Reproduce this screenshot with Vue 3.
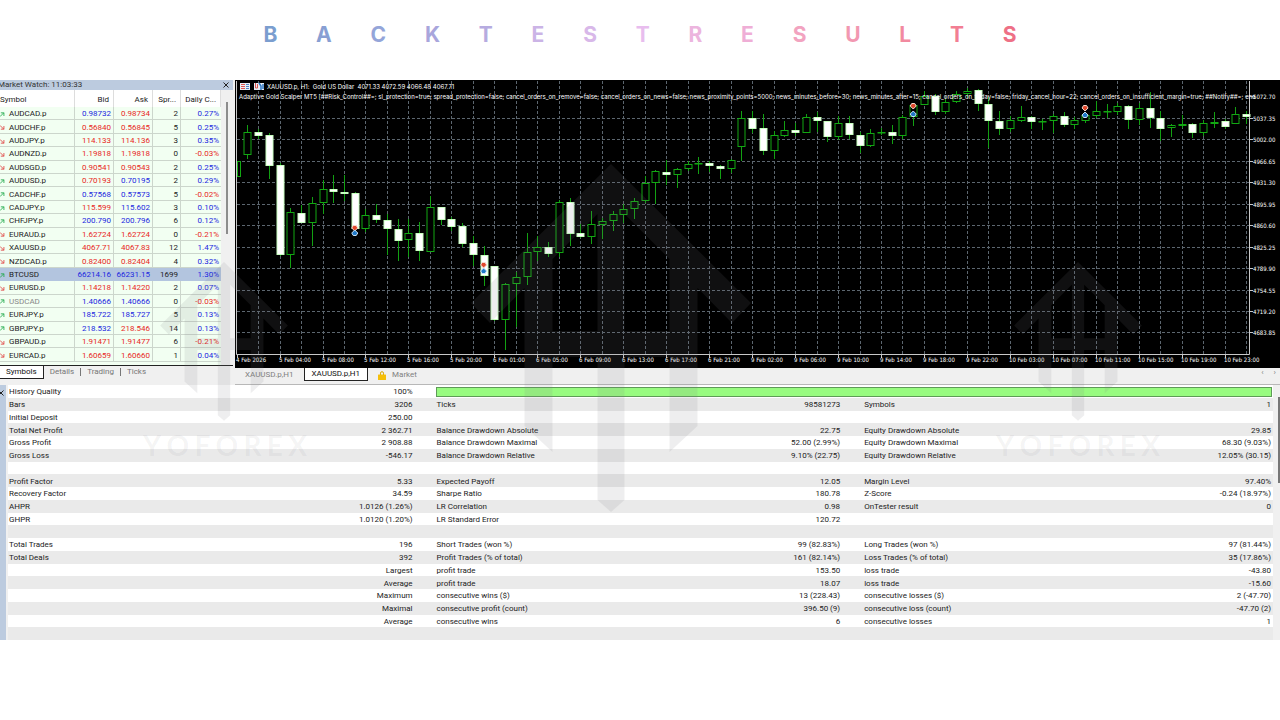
<script setup>
const title = [
  ['B', '#7b9ecf'], ['A', '#889fd3'], ['C', '#94a5d9'], ['K', '#a9a6dc'], ['T', '#b6abe0'],
  ['E', '#cbb4e6'], ['S', '#d8b8e9'], ['T', '#e8bdee'], ['R', '#ecb5de'], ['E', '#efaed6'],
  ['S', '#f2a3c0'], ['U', '#f298b1'], ['L', '#f28aa0'], ['T', '#f27e93'], ['S', '#ee7086'],
]

// symbol, direction, bid, bid tone, ask, ask tone, spread, daily change
const quotes = [
  ['AUDCAD.p', 'u', '0.98732', 'b', '0.98734', 'r', '2', '0.27%'],
  ['AUDCHF.p', 'd', '0.56840', 'r', '0.56845', 'r', '5', '0.25%'],
  ['AUDJPY.p', 'd', '114.133', 'r', '114.136', 'r', '3', '0.35%'],
  ['AUDNZD.p', 'd', '1.19818', 'r', '1.19818', 'r', '0', '-0.03%'],
  ['AUDSGD.p', 'd', '0.90541', 'r', '0.90543', 'r', '2', '0.25%'],
  ['AUDUSD.p', 'u', '0.70193', 'r', '0.70195', 'b', '2', '0.29%'],
  ['CADCHF.p', 'u', '0.57568', 'b', '0.57573', 'b', '5', '-0.02%'],
  ['CADJPY.p', 'u', '115.599', 'r', '115.602', 'b', '3', '0.10%'],
  ['CHFJPY.p', 'u', '200.790', 'b', '200.796', 'b', '6', '0.12%'],
  ['EURAUD.p', 'd', '1.62724', 'r', '1.62724', 'r', '0', '-0.21%'],
  ['XAUUSD.p', 'd', '4067.71', 'r', '4067.83', 'r', '12', '1.47%'],
  ['NZDCAD.p', 'd', '0.82400', 'r', '0.82404', 'r', '4', '0.32%'],
  ['BTCUSD', 'u', '66214.16', 'b', '66231.15', 'b', '1699', '1.30%'],
  ['EURUSD.p', 'd', '1.14218', 'r', '1.14220', 'r', '2', '0.07%'],
  ['USDCAD', 'u', '1.40666', 'b', '1.40666', 'b', '0', '-0.03%'],
  ['EURJPY.p', 'u', '185.722', 'b', '185.727', 'b', '5', '0.13%'],
  ['GBPJPY.p', 'u', '218.532', 'b', '218.546', 'r', '14', '0.13%'],
  ['GBPAUD.p', 'd', '1.91471', 'r', '1.91477', 'r', '6', '-0.21%'],
  ['EURCAD.p', 'd', '1.60659', 'r', '1.60660', 'r', '1', '0.04%'],
]

// full (1) or hollow (0), body top, body bottom, high, low
const candles = [
  [0, 161, 177, 161, 177], [0, 132, 155, 125, 159], [1, 132, 136, 129, 139], [1, 135, 166, 133, 179],
  [1, 165, 255, 163, 256], [0, 212, 255, 208, 268], [1, 213, 223, 205, 223], [0, 203, 223, 197, 246],
  [0, 189, 203, 180, 214], [1, 189, 192, 175, 203], [1, 192, 194, 175, 201], [1, 193, 229, 192, 235],
  [0, 215, 229, 209, 232], [1, 215, 220, 204, 223], [1, 220, 229, 214, 255], [1, 229, 241, 219, 261],
  [0, 233, 240, 219, 257], [1, 233, 251, 222, 261], [0, 207, 252, 196, 252], [1, 207, 220, 207, 225],
  [1, 219, 227, 217, 231], [1, 226, 244, 223, 247], [1, 243, 255, 236, 266], [1, 255, 276, 246, 286],
  [1, 266, 320, 266, 321], [0, 284, 320, 283, 350], [0, 277, 284, 272, 327], [0, 252, 277, 233, 285],
  [0, 247, 252, 236, 261], [1, 247, 254, 242, 257], [0, 202, 253, 200, 257], [1, 202, 234, 198, 246],
  [1, 233, 237, 224, 238], [0, 224, 237, 211, 244], [0, 221, 225, 218, 239], [0, 214, 221, 211, 231],
  [0, 209, 215, 204, 223], [0, 201, 209, 198, 219], [0, 183, 201, 176, 203], [0, 171, 183, 170, 204],
  [1, 172, 175, 160, 185], [0, 169, 175, 168, 188], [0, 164, 169, 161, 171], [0, 163, 163, 157, 174],
  [1, 163, 166, 161, 172], [1, 166, 169, 165, 179], [0, 160, 169, 159, 173], [0, 118, 147, 111, 161],
  [1, 118, 129, 111, 133], [1, 128, 151, 114, 155], [0, 135, 151, 131, 159], [0, 130, 136, 121, 137],
  [1, 130, 133, 123, 136], [0, 117, 133, 114, 133], [1, 117, 121, 112, 132], [1, 121, 137, 121, 142],
  [0, 123, 137, 116, 140], [1, 123, 135, 116, 139], [1, 135, 146, 132, 153], [0, 133, 146, 129, 147],
  [0, 132, 133, 128, 135], [1, 132, 136, 125, 144], [0, 117, 136, 115, 139], [0, 105, 117, 103, 126],
  [0, 96, 105, 91, 105], [1, 96, 112, 94, 115], [0, 102, 112, 99, 114], [0, 94, 102, 91, 103],
  [0, 91, 94, 88, 98], [1, 90, 104, 89, 111], [1, 104, 121, 97, 148], [1, 121, 129, 111, 135],
  [0, 120, 129, 116, 132], [0, 117, 121, 106, 122], [1, 117, 122, 116, 129], [0, 121, 121, 119, 130],
  [0, 116, 121, 114, 133], [1, 116, 125, 112, 127], [0, 120, 125, 117, 129], [0, 115, 121, 115, 123],
  [0, 111, 116, 101, 118], [0, 111, 111, 104, 118], [0, 106, 112, 103, 115], [1, 106, 120, 105, 129],
  [0, 108, 120, 103, 125], [1, 108, 118, 92, 128], [1, 118, 129, 111, 141], [0, 125, 128, 124, 137],
  [0, 124, 126, 115, 128], [1, 124, 133, 123, 138], [0, 123, 133, 120, 136], [0, 122, 124, 112, 128],
  [1, 121, 127, 119, 129], [0, 114, 124, 107, 124], [1, 114, 117, 111, 124],
]
const STEP = 10.74
const cx = (i) => 236.6 + i * STEP
const gx = Array.from({ length: 47 }, (_, k) => Math.round(cx(k * 2 + 2)) + 0.5)

const prices = ['5072.70', '5037.35', '5002.00', '4966.65', '4931.30', '4895.95', '4860.60', '4825.25', '4789.90', '4754.55', '4719.20', '4683.85']
const py = (k) => Math.round(96.2 + k * 21.48) + 0.5
const times = [
  '4 Feb 2026', '5 Feb 04:00', '5 Feb 08:00', '5 Feb 12:00', '5 Feb 16:00', '5 Feb 20:00',
  '6 Feb 01:00', '6 Feb 05:00', '6 Feb 09:00', '6 Feb 13:00', '6 Feb 17:00', '6 Feb 21:00',
  '9 Feb 02:00', '9 Feb 06:00', '9 Feb 10:00', '9 Feb 14:00', '9 Feb 18:00', '9 Feb 22:00',
  '10 Feb 03:00', '10 Feb 07:00', '10 Feb 11:00', '10 Feb 15:00', '10 Feb 19:00', '10 Feb 23:00',
]
const trades = [[11, 228, 233], [23, 265, 271], [63, 106, 114], [79, 108, 115]]

const report = [
  ['Bars', '3206', 'Ticks', '98581273', 'Symbols', '1'],
  ['Initial Deposit', '250.00', '', '', '', ''],
  ['Total Net Profit', '2 362.71', 'Balance Drawdown Absolute', '22.75', 'Equity Drawdown Absolute', '29.85'],
  ['Gross Profit', '2 908.88', 'Balance Drawdown Maximal', '52.00 (2.99%)', 'Equity Drawdown Maximal', '68.30 (9.03%)'],
  ['Gross Loss', '-546.17', 'Balance Drawdown Relative', '9.10% (22.75)', 'Equity Drawdown Relative', '12.05% (30.15)'],
  ['', '', '', '', '', ''],
  ['Profit Factor', '5.33', 'Expected Payoff', '12.05', 'Margin Level', '97.40%'],
  ['Recovery Factor', '34.59', 'Sharpe Ratio', '180.78', 'Z-Score', '-0.24 (18.97%)'],
  ['AHPR', '1.0126 (1.26%)', 'LR Correlation', '0.98', 'OnTester result', '0'],
  ['GHPR', '1.0120 (1.20%)', 'LR Standard Error', '120.72', '', ''],
  ['', '', '', '', '', ''],
  ['Total Trades', '196', 'Short Trades (won %)', '99 (82.83%)', 'Long Trades (won %)', '97 (81.44%)'],
  ['Total Deals', '392', 'Profit Trades (% of total)', '161 (82.14%)', 'Loss Trades (% of total)', '35 (17.86%)'],
  ['', 'Largest', 'profit trade', '153.50', 'loss trade', '-43.80'],
  ['', 'Average', 'profit trade', '18.07', 'loss trade', '-15.60'],
  ['', 'Maximum', 'consecutive wins ($)', '13 (228.43)', 'consecutive losses ($)', '2 (-47.70)'],
  ['', 'Maximal', 'consecutive profit (count)', '396.50 (9)', 'consecutive loss (count)', '-47.70 (2)'],
  ['', 'Average', 'consecutive wins', '6', 'consecutive losses', '1'],
  ['', '', '', '', '', ''],
]
const marks = ['translate(611 84)', 'translate(224 182) scale(.456)', 'translate(1078 182) scale(.456)']
</script>

<template>
  <main class="page">
    <h1 class="title" aria-label="Backtest Results">
      <span v-for="(l, i) in title" :key="i" :style="{ color: l[1] }">{{ l[0] }}</span>
    </h1>

    <div class="board">
      <div class="upper">
        <aside class="watch">
          <div class="watch-bar">
            <span>Market Watch: 11:03:33</span>
            <button class="close" aria-label="Close market watch">
              <svg viewBox="0 0 6 6"><path d="M.5.5l5 5M5.5.5l-5 5" /></svg>
            </button>
          </div>
          <div class="watch-body">
            <div class="quotes-wrap">
              <table class="quotes">
                <colgroup><col class="c1" /><col class="c2" /><col class="c2" /><col class="c3" /><col /></colgroup>
                <thead>
                  <tr><th class="sym">Symbol</th><th>Bid</th><th>Ask</th><th>Spr...</th><th>Daily C...</th></tr>
                </thead>
                <tbody>
                  <tr v-for="q in quotes" :key="q[0]" :class="{ sel: q[0] === 'BTCUSD', dim: q[0] === 'USDCAD' }">
                    <td class="sym">
                      <span class="sym-in">
                        <svg class="arrow" :class="q[1]" viewBox="0 0 6 6">
                          <path v-if="q[1] === 'u'" d="M0 5.500L4.500 1M1 1h3.700v3.800" />
                          <path v-else d="M0 .5L4.500 5M1 5h3.700V1.200" />
                        </svg>
                        <span>{{ q[0] }}</span>
                      </span>
                    </td>
                    <td :class="q[3]">{{ q[2] }}</td>
                    <td :class="q[5]">{{ q[4] }}</td>
                    <td>{{ q[6] }}</td>
                    <td :class="q[7][0] === '-' ? 'r' : 'b'">{{ q[7] }}</td>
                  </tr>
                </tbody>
              </table>
            </div>
            <div class="thumb"></div>
          </div>
          <nav class="watch-tabs">
            <button class="on">Symbols</button><button>Details</button><button>Trading</button><button>Ticks</button>
          </nav>
        </aside>

        <section class="chart-pane">
          <svg class="chart" viewBox="235 80 1045 288" role="img" aria-label="XAUUSD.p H1 candlestick chart">
            <rect x="235" y="80" width="1045" height="288" fill="#000" />
            <g class="grid">
              <path v-for="x in gx" :key="x" :d="`M${x} 81V354`" />
              <path v-for="k in prices.length - 1" :key="k" :d="`M237 ${py(k)}H1249`" />
            </g>
            <path class="axis" d="M236.500 81V354.500H1249.500V81" />
            <g v-for="(c, i) in candles" :key="i" class="candle">
              <path :d="`M${Math.round(cx(i)) + 0.5} ${c[3]}V${c[1]}M${Math.round(cx(i)) + 0.5} ${c[2]}V${c[4]}`" />
              <rect
                :x="i ? Math.round(cx(i)) - 3 : 237.5" :y="c[1] + 0.5"
                :width="i ? 7 : 3" :height="Math.max(c[2] - c[1] - 1, 0.5)"
                :class="{ full: c[0] }"
              />
            </g>
            <g v-for="t in trades" :key="t[0]" class="trade">
              <path class="sell" :d="`M${cx(t[0])} ${t[1] + 3}l-3-3 1.500-2.500h3l1.500 2.500z`" />
              <path class="buy" :d="`M${cx(t[0])} ${t[2] - 3}l3 3-1.500 2.500h-3l-1.500-2.500z`" />
            </g>
            <g>
              <rect x="240" y="83" width="10" height="7" fill="#e8eef5" />
              <path d="M241 84.500h4M241 86.500h4M241 88.500h4" stroke="#e0574f" />
              <path d="M246 84.500h3M246 86.500h3M246 88.500h3" stroke="#4a86c5" />
              <rect x="254" y="83" width="10" height="7" fill="#e8eef5" />
              <path d="M255.500 83v5h2v-4" stroke="#e0574f" fill="none" />
              <path d="M259 83l2 3v4M263 84v5" stroke="#2f78c4" stroke-width="1.500" fill="none" />
            </g>
            <text class="head" x="267" y="89">XAUUSD.p, H1:&#160; Gold US Dollar&#160; 4071.33 4072.59 4066.48 4067.71</text>
            <text class="head" x="239" y="99">Adaptive Gold Scalper MT5 [##Risk_Control##=; sl_protection=true; spread_protection=false; cancel_orders_on_remove=false; cancel_orders_on_news=false; news_proximity_points=5000; news_minutes_before=30; news_minutes_after=15; cancel_orders_on_friday=false; friday_cancel_hour=22; cancel_orders_on_insufficient_margin=true; ##Notify##=; ena</text>
            <g v-for="(p, k) in prices" :key="p">
              <path class="axis" :d="`M1250 ${py(k)}h3`" />
              <text x="1253" :y="py(k) + 2">{{ p }}</text>
            </g>
            <g v-for="(t, k) in times" :key="t">
              <path class="axis" :d="`M${Math.round(cx(k * 4)) + 0.5} 355v3`" />
              <text :x="Math.round(cx(k * 4)) - 1" y="362">{{ t }}</text>
            </g>
          </svg>
          <nav class="chart-tabs">
            <button>XAUUSD.p,H1</button>
            <button class="on">XAUUSD.p,H1</button>
            <button class="market">
              <svg viewBox="0 0 8 9"><path d="M2.500 4V2.200a1.500 1.500 0 0 1 3 0V4" fill="none" stroke="#d9a400" /><rect y="3.500" width="8" height="5.500" rx=".5" fill="#f5bf0a" /></svg>
              <span>Market</span>
            </button>
            <span class="scroll"><button aria-label="Previous">‹</button><button aria-label="Next">›</button></span>
          </nav>
        </section>
      </div>

      <section class="results">
        <div class="strip">
          <button class="close" aria-label="Close results">
            <svg viewBox="0 0 6 6"><path d="M.5.5l5 5M5.5.5l-5 5" /></svg>
          </button>
        </div>
        <table class="report">
          <colgroup><col class="k" /><col class="v" /><col class="k" /><col class="v" /><col class="k" /><col /></colgroup>
          <tbody>
            <tr>
              <td>History Quality</td><td class="n">100%</td>
              <td colspan="4" class="bar-cell"><div class="bar" role="progressbar" aria-valuenow="100" aria-label="History quality"></div></td>
            </tr>
            <tr v-for="(r, i) in report" :key="i">
              <td v-for="(c, j) in r" :key="j" :class="{ n: j % 2 }">{{ c || '\u00a0' }}</td>
            </tr>
          </tbody>
        </table>
        <div class="rail"><div class="rail-thumb"></div></div>
      </section>

      <svg class="marks" viewBox="0 0 1280 560" aria-hidden="true">
        <path
          v-for="m in marks" :key="m" :transform="m" fill-rule="evenodd"
          d="M0 0L140 139L121 159L86.500 124V262L58.500 288V193H13.500V336L0 348L-13.500 336V193H-58.500V288L-86.500 262V124L-121 159L-140 139ZM13.500 50V167H58.500V95ZM-13.500 50V167H-58.500V95Z"
        />
      </svg>
      <div class="brand left" aria-hidden="true"><span v-for="(c, i) in 'YOFOREX'" :key="i">{{ c }}</span></div>
      <div class="brand right" aria-hidden="true"><span v-for="(c, i) in 'YOFOREX'" :key="i">{{ c }}</span></div>
    </div>
  </main>
</template>

<style>
body { margin: 0; background: #fff; }
</style>

<style scoped>
.page { font-family: Roboto, "Open Sans", sans-serif; font-size: 8px; line-height: 10px; color: #222; overflow: hidden; }
button { border: 0; padding: 0; background: none; font: inherit; color: inherit; display: block; }
.title { margin: 0 auto; width: 59%; height: 80px; box-sizing: border-box; padding: 20px 1px 0; display: flex; justify-content: space-between; font: 700 21px/29px Inter, sans-serif; }
.board { position: relative; background: #f0f0f0; }
.upper { display: flex; align-items: stretch; }
.watch { width: 235px; flex: none; display: flex; flex-direction: column; }
.watch-bar { height: 10px; margin-right: 2px; background: #bccbdf; display: flex; justify-content: space-between; align-items: center; overflow: hidden; color: #333; }
.watch-bar span { margin-left: -2px; }
.close { margin-right: 4px; }
.close svg { display: block; width: 6px; height: 6px; stroke: #222; fill: none; }
.watch-body { display: flex; height: 275px; border-bottom: 1px solid #222; margin-right: 2px; }
.quotes-wrap { width: 221px; flex: none; background: #f2fff2; }
.quotes { width: 100%; height: 272px; table-layout: fixed; border-collapse: separate; border-spacing: 0; }
.c1 { width: 75px; }
.c2 { width: 39px; }
.c3 { width: 28px; }
.quotes th { height: 17px; padding: 2px 4px 0 0; font-weight: 400; text-align: right; background: #fff; border-right: 1px solid #ddd; box-sizing: border-box; }
.quotes th.sym { text-align: left; }
.quotes td { padding: 2px 2px 0 0; text-align: right; border-right: 1px solid #ccd6cc; border-bottom: 1px solid #ccd6cc; line-height: 10px; }
.quotes td:last-child { border-right: 0; }
.quotes .sym { padding-left: 0; text-align: left; }
.sym-in { display: flex; align-items: center; gap: 4px; }
.arrow { width: 5px; height: 5px; fill: none; }
.arrow.u { stroke: #1fa84a; }
.arrow.d { stroke: #e04040; }
.quotes .r { color: #e8281e; }
.quotes .b { color: #1c28e0; }
.sel td { background: #b3c5df; border-color: #b3c5df; }
.quotes .dim .sym { color: #888; }
.thumb { width: 2px; height: 132px; margin: 12px 0 0 5px; background: #8c8c8c; }
.watch-tabs { display: flex; align-items: flex-start; color: #777; height: 14px; }
.watch-tabs button { height: 8px; line-height: 8px; margin-top: 2px; padding: 0 6px; border-right: 1px solid #777; }
.watch-tabs button:last-child { border: 0; }
.watch-tabs .on { height: 13px; line-height: 12px; margin: 0; background: #fff; color: #111; border-right: 1px solid #222; border-bottom: 1px solid #222; }
.chart-pane { flex: 1; min-width: 0; }
.chart { display: block; width: 100%; height: auto; }
.chart text { font: 6px "DejaVu Sans Condensed", "DejaVu Sans", sans-serif; fill: #fff; }
.chart .head { font-family: Inter, sans-serif; }
.grid path { stroke: #5c666f; stroke-dasharray: 3 2; fill: none; }
.axis { stroke: #c8c8c8; fill: none; }
.candle path { stroke: #12a012; }
.candle rect { fill: #000; stroke: #12a812; }
.candle .full { fill: #fff; stroke: #c8ffc0; }
.sell { fill: #e0482c; stroke: #f5d8cc; stroke-width: 1px; }
.buy { fill: #1f78c8; stroke: #c8e4f8; stroke-width: 1px; }
.chart-tabs { display: flex; align-items: flex-start; height: 16px; color: #808080; border-bottom: 1px solid #b8b8b8; }
.chart-tabs > button { height: 14px; line-height: 14px; }
.chart-tabs > button:first-child { padding: 0 10px; }
.chart-tabs .on { border: 1px solid #222; border-top: 0; background: #fff; color: #111; padding: 0 7px; height: 13px; box-sizing: border-box; line-height: 12px; }
.market { display: flex; align-items: center; gap: 6px; margin-left: 10px; }
.market svg { width: 8px; height: 9px; }
.scroll { margin-left: auto; display: flex; gap: 10px; padding-right: 4px; }
.results { display: flex; height: 255px; }
.strip { width: 6px; flex: none; margin-right: 2px; background: #bccbdf; }
.strip .close { margin: 5px 0 0 -2px; }
.report { flex: 1; min-width: 0; height: 255px; table-layout: fixed; border-collapse: collapse; background: #fff; }
.report tr:nth-child(even) { background: #eaeaea; }
.report td { padding: 2px 0 0 1px; line-height: 10px; white-space: nowrap; }
.report .n { text-align: right; padding-right: 23px; }
.report td:nth-child(6) { padding-right: 2px; }
.k { width: 17%; }
.v { width: 16.8%; }
.report .bar-cell { padding: 1px 1px 0 0; }
.bar { height: 8px; border: 1px solid #5f9a58; background: #98fb80; }
.rail { width: 7px; flex: none; display: flex; justify-content: flex-end; }
.rail-thumb { width: 2px; height: 86px; margin-top: 12px; background: #777; }
.marks { position: absolute; left: 0; top: 0; width: 100%; pointer-events: none; fill: rgba(125, 125, 132, .13); }
.brand { position: absolute; top: 350px; width: 164px; display: flex; justify-content: space-between; font: 700 28px/30px Lato, sans-serif; color: rgba(100, 100, 110, .07); pointer-events: none; }
.left { left: 143px; }
.right { right: 120px; }
</style>
